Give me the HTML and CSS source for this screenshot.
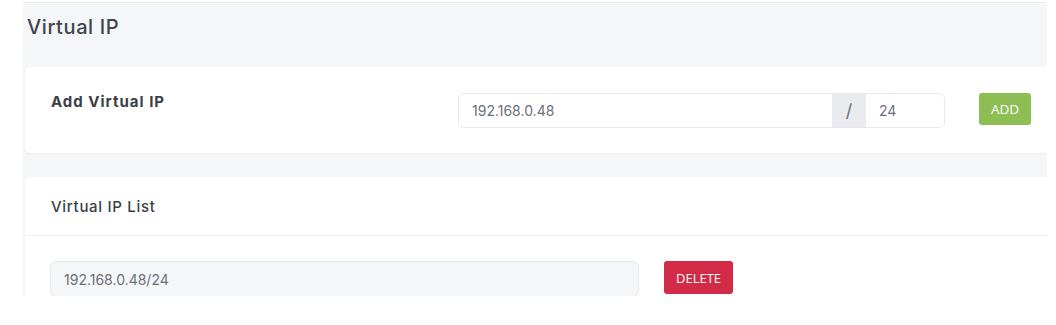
FILE: index.html
```html
<!DOCTYPE html>
<html lang="en">
<head>
    <meta charset="UTF-8">
    <title>Virtual IP</title>
    <link rel="stylesheet" href="styles.css">
</head>
<body>
    <div class="frame">
        <div class="content">
            <h2 class="page-title">Virtual IP</h2>

            <div class="card add-card">
                <div class="add-row">
                    <div class="add-label">Add Virtual IP</div>
                    <div class="input-group">
                        <input type="text" class="ip-input" value="192.168.0.48">
                        <span class="addon">/</span>
                        <input type="text" class="mask-input" value="24">
                    </div>
                    <button class="btn btn-add">ADD</button>
                </div>
            </div>

            <div class="card list-card">
                <div class="card-header">Virtual IP List</div>
                <div class="card-body">
                    <div class="list-row">
                        <input type="text" class="list-input" value="192.168.0.48/24" disabled>
                        <button class="btn btn-delete">DELETE</button>
                    </div>
                </div>
            </div>
        </div>
    </div>
</body>
</html>
```

FILE: styles.css
```css
body {
    margin: 0;
    background-color: #fff;
    font-family: Inter, "Open Sans", sans-serif;
    color: #3a3f46;
}
.frame {
    margin: 2px 0 0 23px;
    width: 1024px;
    height: 294px;
    overflow: hidden;
    background-color: #f5f6f8;
    border-top: 1px solid #e9ebee;
    box-sizing: border-box;
}
.content {
    width: 1120px;
    padding-left: 2px;
}
.page-title {
    margin: 0;
    height: 64px;
    padding: 12px 0 0 2px;
    box-sizing: border-box;
    font-size: 20px;
    font-weight: 500;
    letter-spacing: 0.6px;
    color: #40454c;
}
.card {
    background-color: #fff;
    border-radius: 5px;
    box-shadow: 0 1px 2px rgba(0, 0, 0, 0.04);
}
.add-card {
    height: 86px;
    padding: 26px 26px 0;
    box-sizing: border-box;
    margin-bottom: 24px;
}
.add-row {
    display: flex;
    align-items: flex-start;
}
.add-label {
    width: 407px;
    flex-shrink: 0;
    font-size: 15px;
    font-weight: 700;
    line-height: 18px;
    letter-spacing: 1px;
    color: #3a3f46;
}
.input-group {
    display: flex;
    flex-shrink: 0;
    width: 487px;
    height: 35px;
    border: 1px solid #e6e8eb;
    border-radius: 6px;
    box-sizing: border-box;
    overflow: hidden;
}
.input-group input {
    border: none;
    outline: none;
    box-sizing: border-box;
    flex-shrink: 0;
    font-family: inherit;
    font-size: 14px;
    color: #6c7079;
    padding: 0 13px;
    background: #fff;
}
.ip-input {
    width: 373px;
}
.addon {
    width: 34px;
    flex-shrink: 0;
    background-color: #e9ebee;
    color: #6c7079;
    font-size: 18px;
    display: flex;
    align-items: center;
    justify-content: center;
}
.mask-input {
    width: 78px;
}
.btn {
    border: none;
    color: #fff;
    font-family: "Open Sans", sans-serif;
    border-radius: 3px;
    cursor: pointer;
    padding: 0;
}
.btn-add {
    margin-left: 34px;
    width: 52px;
    height: 32px;
    font-size: 13.5px;
    background-color: #8dbe54;
}
.list-card {
    height: 140px;
}
.card-header {
    height: 59px;
    padding: 0 26px;
    display: flex;
    align-items: center;
    border-bottom: 1px solid #eef0f2;
    box-sizing: border-box;
    font-size: 15px;
    font-weight: 500;
    letter-spacing: 0.7px;
    color: #3a3f46;
}
.card-body {
    padding: 25px 25px;
}
.list-row {
    display: flex;
    align-items: flex-start;
}
.list-input {
    width: 589px;
    height: 36px;
    border: 1px solid #e6e8eb;
    border-radius: 6px;
    background-color: #f5f6f8;
    box-sizing: border-box;
    padding: 0 13px;
    font-family: inherit;
    font-size: 14px;
    color: #6c7079;
}
.btn-delete {
    margin-left: 25px;
    width: 69px;
    height: 33px;
    font-size: 13px;
    background-color: #d22b48;
}
```
